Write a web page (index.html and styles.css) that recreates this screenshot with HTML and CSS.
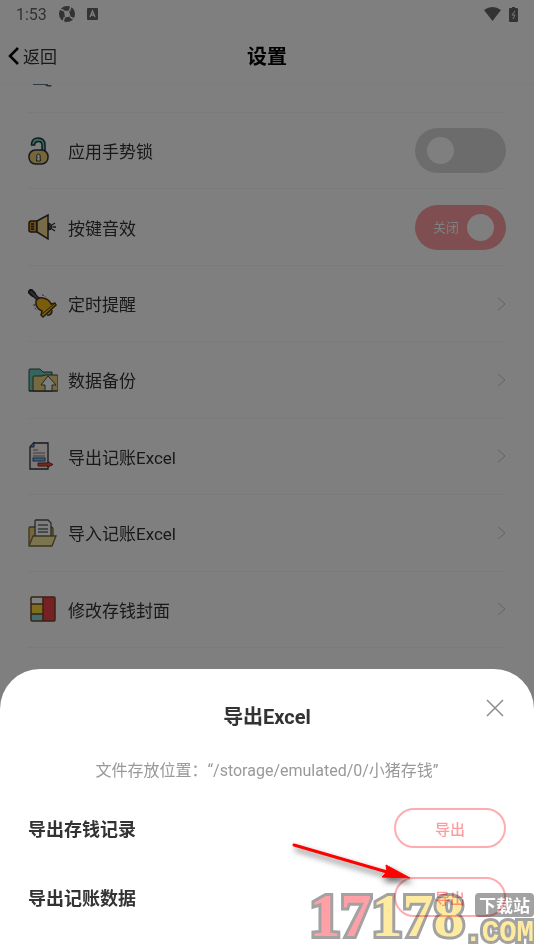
FILE: index.html
```html
<!DOCTYPE html>
<html lang="zh-CN">
<head>
	<meta charset="UTF-8">
	<meta name="viewport" content="width=device-width, initial-scale=1">
	<title>设置</title>
	<link rel="stylesheet" href="styles.css">
</head>
<body>
	<div class="screen">
		<div class="status">
			<span class="time">1:53</span>
			<svg width="16" height="16" viewBox="0 0 16 16"><circle cx="8" cy="8" r="8" fill="#666"/><path d="M5 5 10 4.500 11.500 10.500 6 11.500Z" fill="#fff"/><path d="M5.500 5 1 3M10.500 5 12 0M11 11 15 13M5.500 11 4 16" stroke="#fff" stroke-width="1.500"/></svg>
			<svg width="11" height="12" viewBox="0 0 11 12"><rect width="11" height="12" rx="1" fill="#666"/><path d="M3 9 5.500 3 8 9M4 7H7" stroke="#fff" stroke-width="1.300" fill="none"/></svg>
			<svg class="wifi" width="17" height="14" viewBox="0 0 17 14"><path d="M0 3Q8.500-3 17 3L8.500 14Z" fill="#666"/></svg>
			<svg width="9" height="15" viewBox="0 0 9 15"><path d="M3 0H6V1H8Q9 1 9 2V14Q9 15 8 15H1Q0 15 0 14V2Q0 1 1 1H3Z" fill="#666"/><path d="M6 4 3 8H6L4 12" stroke="#eee" fill="none"/></svg>
		</div>
		<header class="header">
			<a class="back" href="#">
				<svg width="11" height="18" viewBox="0 0 11 18"><path d="M10 1 2 9 10 17" fill="none" stroke="#000" stroke-width="2.500"/></svg>
				返回
			</a>
			<h1>设置</h1>
		</header>

		<ul class="list">
			<li class="cut">
				<svg width="20" height="4" viewBox="0 0 20 4"><path d="M0 .5H15" stroke="#678"/><path d="M12 1H19L18 2H13Z" fill="#567"/><path d="M15 2V3M17 2V3" stroke="#446"/></svg>
			</li>
			<li class="row">
				<svg class="icon" viewBox="0 0 30 30"><path d="M3.500 9V8Q4 2 10 2Q17 2 17 9V16H14V9Q14 5.500 10.500 5.500Q7 5.500 6.500 9Z" fill="#70d5c4" stroke="#24343c" stroke-width="1.500"/><rect x="1" y="14" width="19" height="14" rx="6.500" fill="#efcc72" stroke="#24343c" stroke-width="1.500"/><path d="M10.500 18A2 2 0 0 1 12 21L12.500 25H8.500L9 21A2 2 0 0 1 10.500 18" fill="#fff" stroke="#24343c"/></svg>
				<label for="lock">应用手势锁</label>
				<span class="switch"><input type="checkbox" id="lock"></span>
			</li>
			<li class="row">
				<svg class="icon" viewBox="0 0 30 30"><path d="M9 9H3Q1 9 1 12V18Q1 20 3 20H9Z" fill="#d99630" stroke="#332d28" stroke-width="1.500"/><path d="M9 9 20 3V27L9 20Z" fill="#efd690" stroke="#332d28" stroke-width="1.500"/><path d="M3 12H6M3 14.500H6M3 17H6" stroke="#222" stroke-width="1.500"/><path d="M20.500 11Q24 12 24 15T20.500 18Z" fill="#555" stroke="#222"/><path d="M24 13 27 11M25 15H28M24 17 27 19" stroke="#333" stroke-width="1.300"/></svg>
				<label for="sound">按键音效</label>
				<span class="switch"><input type="checkbox" id="sound" checked><span class="state">关闭</span></span>
			</li>
			<li class="row">
				<svg class="icon" viewBox="0 0 30 30"><path d="M4 4 11 11" stroke="#272731" stroke-width="4" stroke-linecap="round"/><path d="M3 3 5 5" stroke="#272731" stroke-width="6" stroke-linecap="round"/><path d="M3 3 10 10" stroke="#5c5c6a" stroke-width="2" stroke-linecap="round"/><path d="M19 26Q24 27 24 21" fill="#d19a19" stroke="#4a3821" stroke-width="1.500"/><path d="M8 12Q10 8 15 9Q21 10 23 15L27 14 28 16 15 28 13 26 14 22Q7 19 8 12Z" fill="#f4bb14" stroke="#4a3821" stroke-width="1.500"/><path d="M14 25 26 15" stroke="#4a3821"/><path d="M14 6Q16 6 18 8M6 15Q6 19 9 21" stroke="#444" stroke-dasharray="2 2" fill="none"/></svg>
				<a href="#">定时提醒</a>
				<svg class="arrow" viewBox="0 0 9 14"><path d="M1 1 8 7 1 13"/></svg>
			</li>
			<li class="row">
				<svg class="icon" viewBox="0 0 30 30"><path d="M1 26V5Q1 4 2 4H12L15 7H24V26Z" fill="#69cdbd" stroke="#344444"/><path d="M5 26V12Q5 11 6 11H14L17 10H29Q30 10 30 11V26Z" fill="#eed27e" stroke="#444336"/><path d="M20 11 28 20H24V26H17V20H13Z" fill="#fff" stroke="#4b4840"/><path d="M1 26H29" stroke="#344444"/></svg>
				<a href="#">数据备份</a>
				<svg class="arrow" viewBox="0 0 9 14"><path d="M1 1 8 7 1 13"/></svg>
			</li>
			<li class="row">
				<svg class="icon" viewBox="0 0 30 30"><path d="M6 2H20V28H2V6Z" fill="#faf2f2" stroke="#303038" stroke-width="1.300"/><path d="M6 1V6H2Z" fill="#66a8f5" stroke="#303850"/><path d="M5 9H10M5 12H17M5 15H17" stroke="#777"/><rect x="5" y="17" width="12" height="3" fill="#7dc1ff" stroke="#285484"/><path d="M10 22H20V21L25 23.500 20 26V25H10Z" fill="#ee5438" stroke="#742e28"/></svg>
				<a href="#">导出记账Excel</a>
				<svg class="arrow" viewBox="0 0 9 14"><path d="M1 1 8 7 1 13"/></svg>
			</li>
			<li class="row">
				<svg class="icon" viewBox="0 0 30 30"><path d="M1 27V10Q1 9 2 9H23Q25 9 25 12V22" fill="#efcd70" stroke="#766b40" stroke-width="1.300"/><path d="M8 2H20L23 5V21H7V3Q7 2 8 2Z" fill="#fff" stroke="#4b5450" stroke-width="1.300"/><path d="M10 7H20M10 11H20M10 14H20" stroke="#68726c" stroke-width="1.300"/><path d="M5 18H28L24 28H1Z" fill="#f6e99a" stroke="#766b40" stroke-width="1.300"/></svg>
				<a href="#">导入记账Excel</a>
				<svg class="arrow" viewBox="0 0 9 14"><path d="M1 1 8 7 1 13"/></svg>
			</li>
			<li class="row">
				<svg class="icon" viewBox="0 0 30 30"><path d="M3 3H15V10H3Z" fill="#fff"/><path d="M3 10H15V20H3Z" fill="#fadb3b"/><path d="M3 20H15V27H3Z" fill="#8cd7db"/><path d="M15 3H27V27H15Z" fill="#f14349"/><rect x="3" y="3" width="24" height="24" rx="1" fill="none" stroke="#6d4530" stroke-width="1.500"/><path d="M3 10H15M3 20H15M15 3V27" stroke="#6d4530" stroke-width="1.500"/></svg>
				<a href="#">修改存钱封面</a>
				<svg class="arrow" viewBox="0 0 9 14"><path d="M1 1 8 7 1 13"/></svg>
			</li>
		</ul>
		<div class="mask"></div>

		<section class="sheet">
			<h2>导出Excel</h2>
			<button class="close" type="button" aria-label="关闭">
				<svg width="18" height="18" viewBox="0 0 18 18"><path d="M1 1 17 17M17 1 1 17" stroke="#8c8c8c" stroke-width="1.500"/></svg>
			</button>
			<p class="path">文件存放位置：“/storage/emulated/0/小猪存钱”</p>
			<div class="export">
				<span id="save">导出存钱记录</span>
				<button type="button" aria-describedby="save">导出</button>
			</div>
			<div class="export">
				<span id="bill">导出记账数据</span>
				<button type="button" aria-describedby="bill">导出</button>
			</div>
		</section>

		<svg class="pointer" width="126" height="50" viewBox="0 0 126 50"><path d="M5 5 98 32" stroke="#f00" stroke-width="3" stroke-linecap="round"/><path d="M97 25 121 38 93 37 98 32Z" fill="#f00" stroke="#f00"/></svg>

		<div class="logo">
			<div class="num"><span class="pink">17</span><span>178</span></div>
			<div class="side">
				<span class="tag">下载站</span>
				<span class="com">.COM</span>
			</div>
		</div>
	</div>
</body>
</html>
```

FILE: styles.css
```css
* {
	margin: 0;
	padding: 0;
	box-sizing: border-box;
}
body {
	font-family: Roboto, "Noto Sans CJK SC", sans-serif;
	color: #333;
	background: #fff;
}
li {
	list-style: none;
}
a {
	color: inherit;
	text-decoration: none;
}
button {
	font-family: inherit;
	background: none;
	border: 0;
	cursor: pointer;
}
.screen {
	position: relative;
	display: flex;
	flex-direction: column;
	min-height: 100vh;
	overflow: hidden;
}

/* top */
.status {
	display: flex;
	align-items: center;
	gap: 12px;
	height: 28px;
	padding: 0 16px;
	font-size: 16px;
	color: #666;
}
.status .wifi {
	margin-left: auto;
	margin-right: -4px;
}
.header {
	display: grid;
	grid-template-columns: 1fr auto 1fr;
	align-items: center;
	height: 56px;
	padding: 0 8px;
	border-bottom: 1px solid #f8f8f8;
}
.header h1 {
	font-size: 20px;
	font-weight: 700;
	color: #000;
}
.back {
	display: flex;
	align-items: center;
	gap: 4px;
	font-size: 17px;
}

/* list */
.list {
	flex: 1;
	display: flex;
	flex-direction: column;
	padding: 0 28px 21px;
}
.list li {
	border-bottom: 1px solid #f4f4f4;
}
.cut {
	height: 29px;
	padding-left: 5px;
}
.cut svg {
	display: block;
}
.row {
	flex: 1 0 76px;
	display: flex;
	align-items: center;
	font-size: 17px;
}
.row a,
.row label {
	flex: 1;
}
.icon {
	width: 30px;
	height: 30px;
	margin-right: 10px;
}
.arrow {
	width: 9px;
	height: 14px;
	fill: none;
	stroke: #c8c8c8;
}
.switch {
	position: relative;
	height: 45px;
}
.switch input {
	display: flex;
	align-items: center;
	width: 91px;
	height: 45px;
	padding: 0 12px;
	border-radius: 23px;
	background: #d8d8d8;
	appearance: none;
}
.switch input::before {
	content: "";
	width: 27px;
	height: 27px;
	border-radius: 50%;
	background: #fff;
}
.switch input:checked {
	justify-content: flex-end;
	background: #ff9ca0;
}
.state {
	position: absolute;
	left: 18px;
	top: 0;
	line-height: 45px;
	font-size: 13px;
	color: #fff;
	pointer-events: none;
}
.mask {
	position: absolute;
	inset: 0;
	background: rgba(0, 0, 0, .5);
}

/* bottom sheet */
.sheet {
	position: relative;
	padding: 32px 28px 33px;
	border-radius: 40px 40px 0 0;
	background: #fff;
}
.sheet h2 {
	line-height: 32px;
	font-size: 20px;
	font-weight: 700;
	text-align: center;
}
.close {
	position: absolute;
	top: 24px;
	right: 24px;
	width: 30px;
	height: 30px;
}
.close svg {
	display: block;
	margin: auto;
}
.path {
	margin: 26px 0 25px;
	line-height: 24px;
	font-size: 16px;
	color: #999;
	text-align: center;
}
.export {
	display: flex;
	align-items: center;
	justify-content: space-between;
	font-size: 18px;
	font-weight: 700;
}
.export + .export {
	margin-top: 29px;
}
.export button {
	width: 112px;
	height: 40px;
	border: 2px solid #ffacb0;
	border-radius: 20px;
	font-size: 15px;
	font-weight: 500;
	color: #ff9ca0;
}

/* over the sheet */
.pointer {
	position: absolute;
	right: 119px;
	bottom: 60px;
	filter: drop-shadow(2px 4px 3px rgba(0, 0, 0, .6));
}
.logo {
	position: absolute;
	right: 0;
	bottom: 0;
	display: flex;
	align-items: flex-end;
	font-weight: bold;
	color: #feeb9f;
	mix-blend-mode: multiply;
	pointer-events: none;
}
.num,
.com {
	-webkit-text-stroke: 6px #a2a2a2;
	paint-order: stroke fill;
}
.num {
	line-height: 70px;
	font-family: "Liberation Serif", serif;
	font-size: 62px;
}
.pink {
	color: #fea0a6;
}
.side {
	display: flex;
	flex-direction: column;
	align-items: flex-end;
}
.tag {
	padding: 0 4px;
	border-radius: 4px;
	line-height: 24px;
	font-family: "Noto Sans CJK SC", sans-serif;
	font-size: 17px;
	color: #fff;
	background: #a2a2a2;
}
.com {
	line-height: 33px;
	font-family: "Liberation Mono", monospace;
	font-size: 29px;
}
```
